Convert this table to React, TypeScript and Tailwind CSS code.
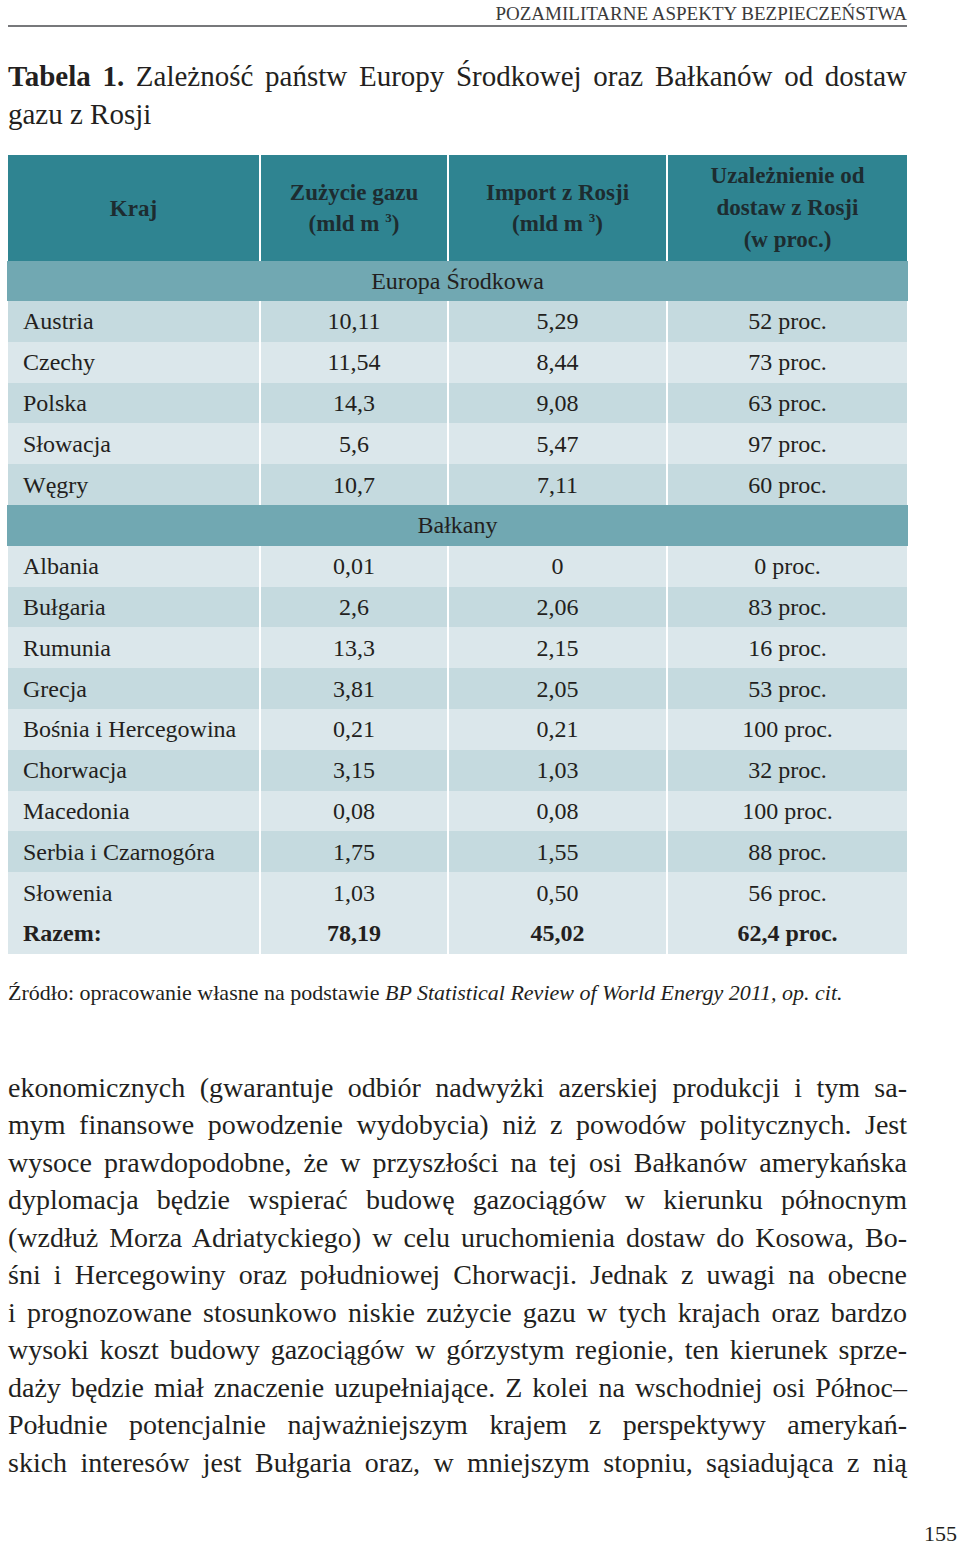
import React from "react";

const serif = "font-['Liberation_Serif','Times_New_Roman',serif]";

const rows: { kraj: string; zuz: string; imp: string; proc: string; dark: boolean; section?: string }[] = [
  { section: "Europa Środkowa", kraj: "", zuz: "", imp: "", proc: "", dark: false },
  { kraj: "Austria", zuz: "10,11", imp: "5,29", proc: "52 proc.", dark: true },
  { kraj: "Czechy", zuz: "11,54", imp: "8,44", proc: "73 proc.", dark: false },
  { kraj: "Polska", zuz: "14,3", imp: "9,08", proc: "63 proc.", dark: true },
  { kraj: "Słowacja", zuz: "5,6", imp: "5,47", proc: "97 proc.", dark: false },
  { kraj: "Węgry", zuz: "10,7", imp: "7,11", proc: "60 proc.", dark: true },
  { section: "Bałkany", kraj: "", zuz: "", imp: "", proc: "", dark: false },
  { kraj: "Albania", zuz: "0,01", imp: "0", proc: "0 proc.", dark: false },
  { kraj: "Bułgaria", zuz: "2,6", imp: "2,06", proc: "83 proc.", dark: true },
  { kraj: "Rumunia", zuz: "13,3", imp: "2,15", proc: "16 proc.", dark: false },
  { kraj: "Grecja", zuz: "3,81", imp: "2,05", proc: "53 proc.", dark: true },
  { kraj: "Bośnia i Hercegowina", zuz: "0,21", imp: "0,21", proc: "100 proc.", dark: false },
  { kraj: "Chorwacja", zuz: "3,15", imp: "1,03", proc: "32 proc.", dark: true },
  { kraj: "Macedonia", zuz: "0,08", imp: "0,08", proc: "100 proc.", dark: false },
  { kraj: "Serbia i Czarnogóra", zuz: "1,75", imp: "1,55", proc: "88 proc.", dark: true },
  { kraj: "Słowenia", zuz: "1,03", imp: "0,50", proc: "56 proc.", dark: false },
];

const body = [
  "ekonomicznych (gwarantuje odbiór nadwyżki azerskiej produkcji i tym sa-",
  "mym finansowe powodzenie wydobycia) niż z powodów politycznych. Jest",
  "wysoce prawdopodobne, że w przyszłości na tej osi Bałkanów amerykańska",
  "dyplomacja będzie wspierać budowę gazociągów w kierunku północnym",
  "(wzdłuż Morza Adriatyckiego) w celu uruchomienia dostaw do Kosowa, Bo-",
  "śni i Hercegowiny oraz południowej Chorwacji. Jednak z uwagi na obecne",
  "i prognozowane stosunkowo niskie zużycie gazu w tych krajach oraz bardzo",
  "wysoki koszt budowy gazociągów w górzystym regionie, ten kierunek sprze-",
  "daży będzie miał znaczenie uzupełniające. Z kolei na wschodniej osi Północ–",
  "Południe potencjalnie najważniejszym krajem z perspektywy amerykań-",
  "skich interesów jest Bułgaria oraz, w mniejszym stopniu, sąsiadująca z nią",
];

const Sup = () => <sup className="text-[13px] relative -top-[9px]">3</sup>;

export default function App() {
  return (
    <div className={`w-[960px] h-[1545px] bg-white text-[#231f20] ${serif}`}>
      <div className="w-[899px] ml-[8px] flex flex-col">
        {/* running header */}
        <div className="pt-[3px] h-[25px] text-right text-[19px] leading-[22px] text-[#3a3a3a]">
          POZAMILITARNE ASPEKTY BEZPIECZEŃSTWA
        </div>
        <div className="h-[2px] bg-[#77787b]" />

        {/* title */}
        <div className="mt-[30px] text-[29px] leading-[38px]">
          <div className="text-justify [text-align-last:justify] whitespace-nowrap">
            <b>Tabela 1.</b> Zależność państw Europy Środkowej oraz Bałkanów od dostaw
          </div>
          <div>gazu z Rosji</div>
        </div>

        {/* table */}
        <div className="mt-[22px] grid grid-cols-[251px_186px_217px_239px] gap-x-[2px]">
          <div className="h-[106px] bg-[#2f8491] flex items-center justify-center font-bold text-[23px] leading-[31px] text-[#1d2c30]">
            Kraj
          </div>
          <div className="h-[106px] bg-[#2f8491] flex flex-col items-center justify-center font-bold text-[23px] leading-[31px] text-[#1d2c30]">
            <span>Zużycie gazu</span>
            <span>(mld m <Sup />)</span>
          </div>
          <div className="h-[106px] bg-[#2f8491] flex flex-col items-center justify-center font-bold text-[23px] leading-[31px] text-[#1d2c30]">
            <span>Import z Rosji</span>
            <span>(mld m <Sup />)</span>
          </div>
          <div className="h-[106px] bg-[#2f8491] flex flex-col items-center justify-center font-bold text-[23px] leading-[32px] text-[#1d2c30]">
            <span>Uzależnienie od</span>
            <span>dostaw z Rosji</span>
            <span>(w proc.)</span>
          </div>

          {rows.map((r, i) =>
            r.section ? (
              <div
                key={i}
                className={`col-span-4 -mx-[1px] bg-[#71a8b2] flex items-center justify-center text-[24px] ${i === 0 ? "h-[40px]" : "h-[40.8px]"}`}
              >
                {r.section}
              </div>
            ) : (
              <React.Fragment key={i}>
                <div className={`h-[40.8px] flex items-center pl-[15px] text-[24px] ${r.dark ? "bg-[#c5dadf]" : "bg-[#dbe7eb]"}`}>
                  {r.kraj}
                </div>
                <div className={`h-[40.8px] flex items-center justify-center text-[24px] ${r.dark ? "bg-[#c5dadf]" : "bg-[#dbe7eb]"}`}>
                  {r.zuz}
                </div>
                <div className={`h-[40.8px] flex items-center justify-center text-[24px] ${r.dark ? "bg-[#c5dadf]" : "bg-[#dbe7eb]"}`}>
                  {r.imp}
                </div>
                <div className={`h-[40.8px] flex items-center justify-center text-[24px] ${r.dark ? "bg-[#c5dadf]" : "bg-[#dbe7eb]"}`}>
                  {r.proc}
                </div>
              </React.Fragment>
            )
          )}
          <div className="h-[40.8px] flex items-center pl-[15px] text-[24px] font-bold bg-[#dbe7eb]">Razem:</div>
          <div className="h-[40.8px] flex items-center justify-center text-[24px] font-bold bg-[#dbe7eb]">78,19</div>
          <div className="h-[40.8px] flex items-center justify-center text-[24px] font-bold bg-[#dbe7eb]">45,02</div>
          <div className="h-[40.8px] flex items-center justify-center text-[24px] font-bold bg-[#dbe7eb]">62,4 proc.</div>
        </div>

        {/* source */}
        <div className="mt-[26px] text-[22px] leading-[26px]">
          Źródło: opracowanie własne na podstawie <i>BP Statistical Review of World Energy 2011, op. cit.</i>
        </div>

        {/* body text */}
        <div className="mt-[63px] text-[28px] leading-[37.5px]">
          {body.map((line, i) => (
            <div key={i} className="text-justify [text-align-last:justify] whitespace-nowrap">
              {line}
            </div>
          ))}
        </div>
      </div>

      <div className="mt-[40px] w-[957px] text-right text-[22px] leading-[26px]">155</div>
    </div>
  );
}
